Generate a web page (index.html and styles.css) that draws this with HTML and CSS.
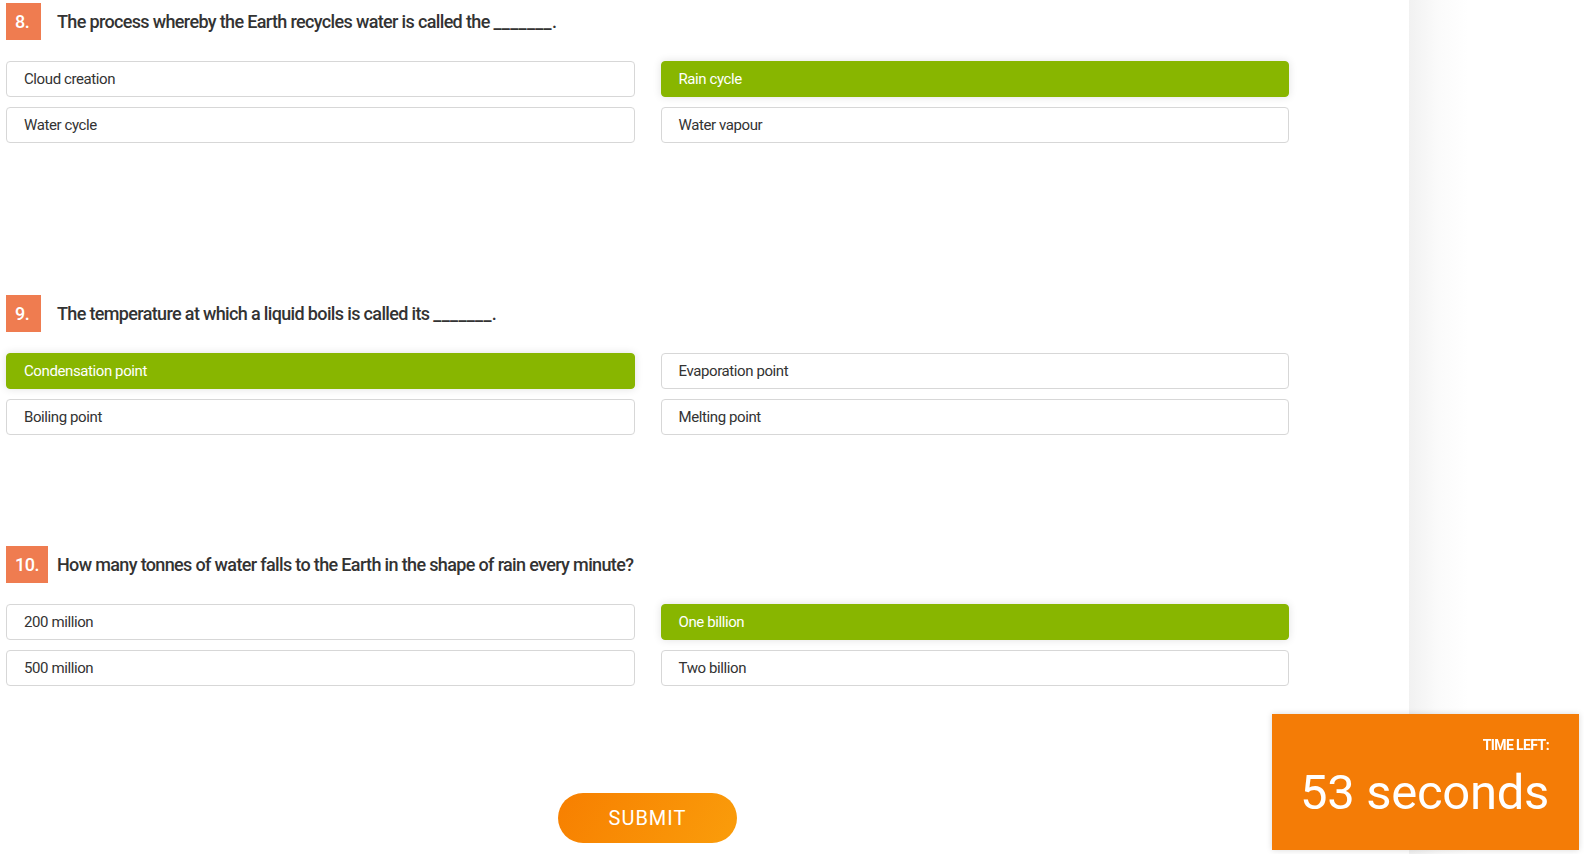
FILE: index.html
```html
<!DOCTYPE html>
<html lang="en">
<head>
    <meta charset="UTF-8">
    <meta name="viewport" content="width=device-width, initial-scale=1.0">
    <title>Water Quiz</title>
    <link rel="stylesheet" href="styles.css">
</head>
<body>
    <div class="page">
        <main class="quiz">
            <section class="question question--first">
                <div class="question-head">
                    <span class="badge">8.</span>
                    <h2>The process whereby the Earth recycles water is called the <span class="blank">_______</span>.</h2>
                </div>
                <div class="answers">
                    <div class="answer">Cloud creation</div>
                    <div class="answer selected">Rain cycle</div>
                    <div class="answer">Water cycle</div>
                    <div class="answer">Water vapour</div>
                </div>
            </section>

            <section class="question">
                <div class="question-head">
                    <span class="badge">9.</span>
                    <h2>The temperature at which a liquid boils is called its <span class="blank">_______</span>.</h2>
                </div>
                <div class="answers">
                    <div class="answer selected">Condensation point</div>
                    <div class="answer">Evaporation point</div>
                    <div class="answer">Boiling point</div>
                    <div class="answer">Melting point</div>
                </div>
            </section>

            <section class="question">
                <div class="question-head">
                    <span class="badge">10.</span>
                    <h2>How many tonnes of water falls to the Earth in the shape of rain every minute?</h2>
                </div>
                <div class="answers">
                    <div class="answer">200 million</div>
                    <div class="answer selected">One billion</div>
                    <div class="answer">500 million</div>
                    <div class="answer">Two billion</div>
                </div>
            </section>

            <div class="actions">
                <button class="submit">SUBMIT</button>
            </div>
        </main>
        <aside class="sidebar"></aside>
    </div>

    <div class="timer">
        <div class="timer-label">TIME LEFT:</div>
        <div class="timer-value">53 seconds</div>
    </div>
</body>
</html>
```

FILE: styles.css
```css
body {
    margin: 0;
    font-family: Roboto, 'Noto Sans', Arial, sans-serif;
    color: #333;
    background-color: #fff;
}
.page {
    display: flex;
    min-height: 854px;
}
.quiz {
    width: 1283px;
    padding: 3px 120px 0 6px;
}
.sidebar {
    flex: 1;
    background: linear-gradient(to right, #f1f1f1, #fbfbfb 30px, #fff 60px);
}
.question {
    margin-bottom: 111px;
}
.question--first {
    margin-bottom: 152px;
}
.question-head {
    display: grid;
    grid-template-columns: 51px 1fr;
    align-items: center;
    margin-bottom: 21px;
}
.badge {
    justify-self: start;
    background-color: #ef7c50;
    color: #fff;
    font-size: 18px;
    font-weight: 500;
    height: 37px;
    line-height: 37px;
    padding: 0 9px;
    min-width: 17px;
    letter-spacing: -0.5px;
}
h2 {
    margin: 0;
    font-size: 18px;
    font-weight: 500;
    letter-spacing: -0.65px;
    color: #333;
}
.blank {
    letter-spacing: 0.3px;
}
.answers {
    display: grid;
    grid-template-columns: 1fr 1fr;
    column-gap: 26px;
    row-gap: 10px;
}
.answer {
    height: 34px;
    line-height: 35px;
    border: 1px solid #d7d7d7;
    border-radius: 4px;
    padding: 0 17px;
    font-size: 15px;
    letter-spacing: -0.4px;
    color: #333;
}
.answer.selected {
    background-color: #88b600;
    border-color: #88b600;
    color: #fff;
    box-shadow: 0 0 8px rgba(0, 0, 0, 0.12);
}
.actions {
    display: flex;
    justify-content: center;
    margin-top: -4px;
}
.submit {
    width: 179px;
    height: 50px;
    border: none;
    border-radius: 25px;
    background: linear-gradient(120deg, #f77f00, #fa9d0b);
    color: #fff;
    font-family: Roboto, Arial, sans-serif;
    font-size: 20px;
    letter-spacing: 1px;
    cursor: pointer;
}
.timer {
    position: fixed;
    right: 5px;
    bottom: 4px;
    width: 307px;
    height: 136px;
    box-sizing: border-box;
    padding: 23px 30px 0 20px;
    background-color: #f47c06;
    color: #fff;
    text-align: right;
    box-shadow: 0 0 6px rgba(0, 0, 0, 0.15);
}
.timer-label {
    font-size: 14px;
    font-weight: 700;
    letter-spacing: -0.6px;
}
.timer-value {
    font-size: 49px;
    margin-top: 11px;
    letter-spacing: -0.3px;
}
```
